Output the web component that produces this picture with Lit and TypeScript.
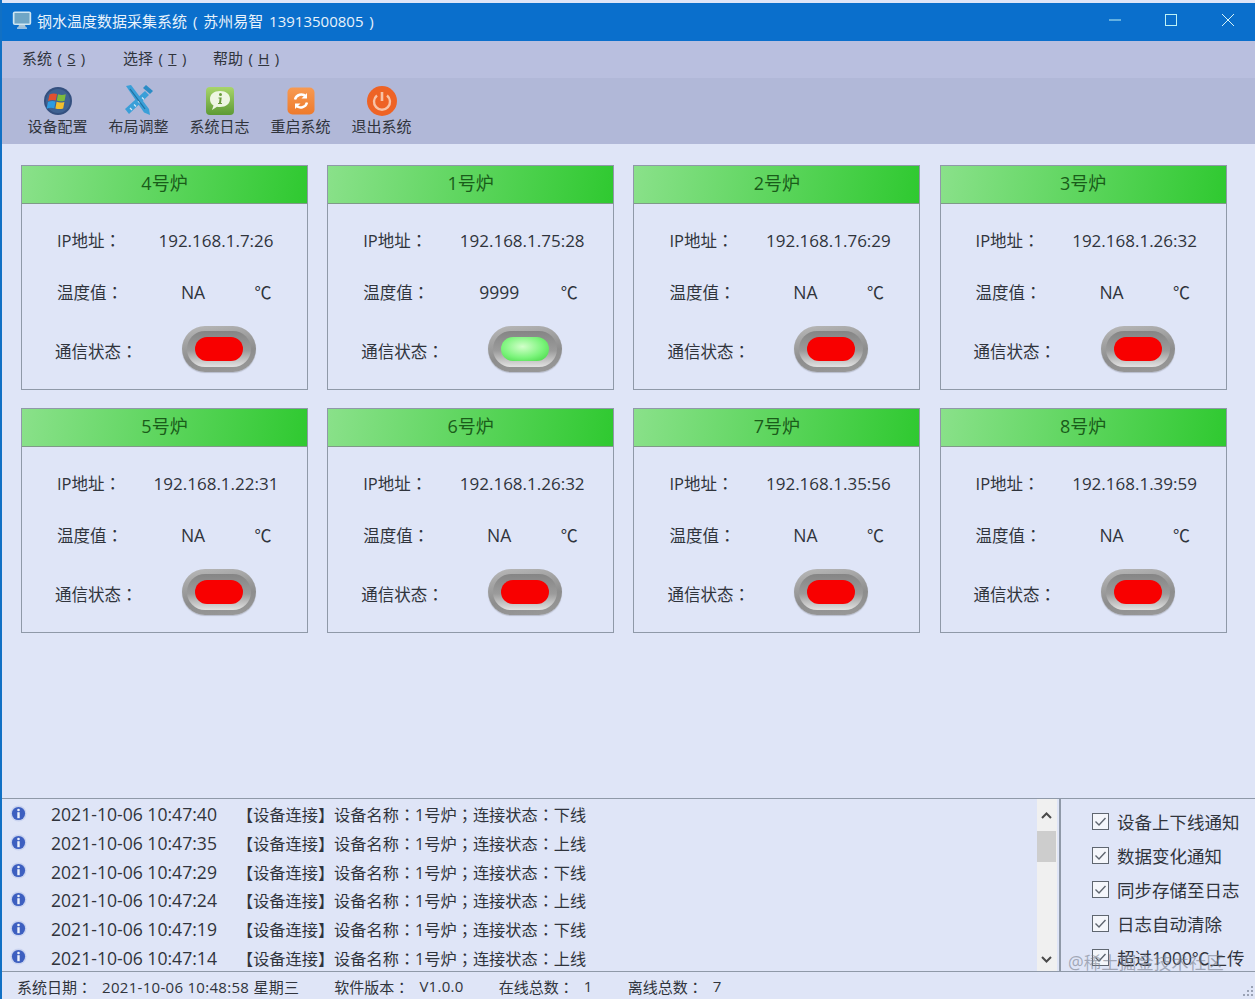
import {LitElement, html, css} from 'lit';
import {customElement, property} from 'lit/decorators.js';
import {classMap} from 'lit/directives/class-map.js';

const furnaces = [
    {name: '4号炉', ip: '192.168.1.7:26', temp: 'NA', online: false},
    {name: '1号炉', ip: '192.168.1.75:28', temp: '9999', online: true},
    {name: '2号炉', ip: '192.168.1.76:29', temp: 'NA', online: false},
    {name: '3号炉', ip: '192.168.1.26:32', temp: 'NA', online: false},
    {name: '5号炉', ip: '192.168.1.22:31', temp: 'NA', online: false},
    {name: '6号炉', ip: '192.168.1.26:32', temp: 'NA', online: false},
    {name: '7号炉', ip: '192.168.1.35:56', temp: 'NA', online: false},
    {name: '8号炉', ip: '192.168.1.39:59', temp: 'NA', online: false},
];

const logs = [
    {time: '2021-10-06 10:47:40', state: '下线'},
    {time: '2021-10-06 10:47:35', state: '上线'},
    {time: '2021-10-06 10:47:29', state: '下线'},
    {time: '2021-10-06 10:47:24', state: '上线'},
    {time: '2021-10-06 10:47:19', state: '下线'},
    {time: '2021-10-06 10:47:14', state: '上线'},
];

const options = ['设备上下线通知', '数据变化通知', '同步存储至日志', '日志自动清除', '超过1000℃上传'];

// the TC face centres full-width colons and semicolons, the SC one pushes them left
const punct = css`
    .p {
        font-family: 'Noto Sans CJK TC', sans-serif;
    }
`;

const zh = (text: string) =>
    text.split(/([：；])/).map((part) => (part === '：' || part === '；' ? html`<span class="p">${part}</span>` : part));

const monitorIcon = html`<svg width="20" height="20" viewBox="0 0 20 20">
    <rect x="0.8" y="1.5" width="18.4" height="13.5" rx="2" fill="#cfe6f2" />
    <rect x="2.5" y="3" width="15" height="10.5" fill="#6fa6c6" />
    <path d="M7 15h6l1 2.5H6z" fill="#a9c4d4" />
    <rect x="5" y="17.5" width="10" height="1.2" fill="#d6e4ec" />
</svg>`;

const orbIcon = html`<svg width="30" height="30" viewBox="0 0 30 30">
    <circle cx="15" cy="15" r="14" fill="#34507f" />
    <circle cx="15" cy="15" r="12" fill="#3f6292" />
    <path d="M6.500 8.500q3.500-1.800 7.500-.6l-1.200 6.600q-4-1.200-7.700 .6z" fill="#e2512f" />
    <path d="M15 8.200q3.500 1.400 7.800 .1l-1.200 6.400q-4.200 1.200-7.800-.1z" fill="#7dbb3c" />
    <path d="M5 16q3.500-1.800 7.500-.6l-1.200 6.800q-4-1.200-7.700 .6z" fill="#2f9be0" />
    <path d="M13.600 15.800q3.500 1.400 7.800 .1l-1.200 6.600q-4.200 1.200-7.800-.1z" fill="#f4bf2c" />
</svg>`;

const toolsIcon = html`<svg width="30" height="32" viewBox="0 0 30 32">
    <path d="M2 1l5-1 18 24 1 6-6-2.500z" fill="#3a9fd8" />
    <path d="M1 24L21 6l4 4L5 29z" fill="#3a9fd8" />
    <path d="M19 3l3-3 7 6-3 3z" fill="#2b8cc6" />
    <path d="M6 23l2 2M10 19.500l2 2M14 16l2 2M18 12.500l2 2" stroke="#d5eaf6" stroke-width="1.200" />
    <path d="M6 4l15 20" stroke="#1f6f9f" stroke-width="1.200" />
</svg>`;

const bubbleIcon = html`<svg width="30" height="30" viewBox="0 0 30 30">
    <defs>
        <linearGradient id="bubble" x1="0" y1="0" x2="0" y2="1">
            <stop offset="0" stop-color="#a8d56a" />
            <stop offset="1" stop-color="#5d9a35" />
        </linearGradient>
    </defs>
    <rect x="1" y="1" width="28" height="28" rx="4" fill="url(#bubble)" />
    <path d="M15 5c6 0 10 3.200 10 8s-4 8-10 8c-1 0-2-.1-3-.3L7 24l1.500-4.500C6 18 5 15.800 5 13c0-4.800 4-8 10-8z" fill="#eef6e2" />
    <circle cx="15.500" cy="8.500" r="1.500" fill="#6a9a3c" />
    <path d="M13.500 11.500h3.200l-.7 5.500h1v1h-4v-1h1l.6-4.500h-1.100z" fill="#6a9a3c" />
</svg>`;

const refreshIcon = html`<svg width="28" height="28" viewBox="0 0 28 28">
    <defs>
        <linearGradient id="orange" x1="0" y1="0" x2="0" y2="1">
            <stop offset="0" stop-color="#f79a52" />
            <stop offset="1" stop-color="#ee7a2c" />
        </linearGradient>
    </defs>
    <rect x="0.5" y="0.5" width="27" height="27" rx="5" fill="url(#orange)" />
    <path d="M8 12.500a6.500 6.500 0 0 1 11-3" fill="none" stroke="#fff" stroke-width="2.400" />
    <path d="M20 6v5.500h-5.500z" fill="#fff" />
    <path d="M20 15.500a6.500 6.500 0 0 1-11 3" fill="none" stroke="#fff" stroke-width="2.400" />
    <path d="M8 22v-5.500h5.500z" fill="#fff" />
</svg>`;

const powerIcon = html`<svg width="30" height="30" viewBox="0 0 30 30">
    <circle cx="15" cy="15" r="15" fill="#ee6325" />
    <path d="M10 9.500a8 8 0 1 0 10 0" fill="none" stroke="#f8c3a6" stroke-width="2.400" />
    <path d="M15 6v9" stroke="#f8c3a6" stroke-width="2.600" />
</svg>`;

const tools = [
    {label: '设备配置', icon: orbIcon},
    {label: '布局调整', icon: toolsIcon},
    {label: '系统日志', icon: bubbleIcon},
    {label: '重启系统', icon: refreshIcon},
    {label: '退出系统', icon: powerIcon},
];

const infoIcon = html`<svg width="17" height="17" viewBox="0 0 17 17">
    <circle cx="8.500" cy="8.500" r="8" fill="#c9d3ef" />
    <circle cx="8.500" cy="8.500" r="6.600" fill="#3d5fc0" />
    <circle cx="8.500" cy="5" r="1.300" fill="#eef2fb" />
    <rect x="7.300" y="7.200" width="2.400" height="6" fill="#eef2fb" />
</svg>`;

/**
 * One furnace card with its address, temperature and connection lamp.
 */
@customElement('furnace-card')
export class FurnaceCard extends LitElement {
    static override styles = [
        punct,
        css`
            :host {
                display: block;
            }

            .card {
                height: 225px;
                box-sizing: border-box;
                border: 1px solid #8f99a8;
                color: #30343c;
                font-size: 16.5px;
            }

            .head {
                height: 38px;
                box-sizing: border-box;
                padding-bottom: 5px;
                display: flex;
                align-items: center;
                justify-content: center;
                background: linear-gradient(100deg, #8ae18a, #2fc930);
                border-bottom: 1px solid #7f9a88;
                color: #1a5c1a;
                font-size: 18px;
            }

            .body {
                padding: 24px 0 0 35px;
            }

            .row {
                height: 24px;
                display: grid;
                grid-template-columns: 84px 104px 36px;
                align-items: center;
            }

            .row + .row {
                margin-top: 27px;
            }

            .value {
                font-size: 17.5px;
                text-align: center;
                white-space: nowrap;
            }

            .ip {
                grid-template-columns: 84px 150px;
            }

            .ip .value {
                font-size: 17px;
            }

            .unit {
                text-align: center;
                font-size: 17px;
            }

            .status {
                display: flex;
                align-items: center;
                height: 46px;
                margin: 23px 0 0 -2px;
            }

            .status span.label {
                width: 127px;
                flex: none;
                padding-top: 3px;
            }

            .lamp {
                width: 74px;
                height: 46px;
                box-sizing: border-box;
                padding: 5px;
                border-radius: 23px;
                background: linear-gradient(170deg, #b9b9b9, #8d8d8d 60%, #9a9a9a);
                box-shadow: 0 1px 1px #b7bccb;
            }

            .ring {
                height: 100%;
                box-sizing: border-box;
                padding: 6px 8px;
                border-radius: 18px;
                background: linear-gradient(180deg, #858585, #9b9b9b 55%, #e2e2e2);
            }

            .light {
                height: 100%;
                border-radius: 12px;
                background: #f80000;
            }

            .online .light {
                background: radial-gradient(ellipse at 45% 40%, #d2ffca, #7bf47b 55%, #3fd23f);
            }
        `,
    ];

    @property({attribute: false})
    furnace = furnaces[0];

    override render() {
        const f = this.furnace;
        return html`
            <div class="card">
                <div class="head">${f.name}</div>
                <div class="body">
                    <div class="row ip">
                        <span>${zh('IP地址：')}</span>
                        <span class="value">${f.ip}</span>
                    </div>
                    <div class="row">
                        <span>${zh('温度值：')}</span>
                        <span class="value">${f.temp}</span>
                        <span class="unit">℃</span>
                    </div>
                    <div class="status ${classMap({online: f.online})}">
                        <span class="label">${zh('通信状态：')}</span>
                        <div class="lamp"><div class="ring"><div class="light"></div></div></div>
                    </div>
                </div>
            </div>
        `;
    }
}

@customElement('app-root')
export class AppRoot extends LitElement {
    static override styles = [
        punct,
        css`
            :host {
                display: flex;
                flex-direction: column;
                width: 1255px;
                height: 999px;
                box-sizing: border-box;
                border-left: 2px solid #1170c4;
                background: #dfe5f7;
                overflow: hidden;
                font-family: 'Open Sans', 'Noto Sans CJK SC', sans-serif;
                color: #30343c;
            }

            .titlebar {
                height: 38px;
                flex: none;
                margin-top: 3px;
                box-sizing: border-box;
                padding: 0 0 4px 10px;
                display: flex;
                align-items: center;
                background: #0a6fcc;
                color: #e8f2fb;
                font-size: 15px;
                word-spacing: 2px;
            }

            .titlebar .title {
                margin-left: 5px;
                white-space: nowrap;
            }

            .controls {
                margin-left: auto;
                padding-right: 21px;
                display: flex;
                align-items: center;
            }

            .controls svg {
                display: block;
            }

            .controls .max {
                margin-left: 44px;
            }

            .controls .close {
                margin-left: 45px;
            }

            .menubar {
                height: 37px;
                flex: none;
                box-sizing: border-box;
                padding: 0 0 4px 20px;
                display: flex;
                align-items: center;
                background: #b9bfdf;
                font-size: 15px;
                word-spacing: 1.5px;
            }

            .menubar span {
                white-space: pre;
            }

            .menu-s {
                width: 101px;
            }

            .menu-t {
                width: 90px;
            }

            .toolbar {
                height: 66px;
                flex: none;
                display: flex;
                padding-left: 15px;
                background: #b1b8d8;
                box-sizing: border-box;
            }

            .tool {
                width: 81px;
                display: flex;
                flex-direction: column;
                align-items: center;
                font-size: 15px;
            }

            .tool .icon {
                height: 32px;
                margin-top: 7px;
                display: flex;
                align-items: center;
            }

            .tool .icon svg {
                display: block;
            }

            .tool .label {
                margin-top: -2px;
                line-height: 22px;
            }

            .grid {
                flex: 1;
                min-height: 0;
                display: grid;
                grid-template-columns: repeat(4, 287px);
                grid-auto-rows: 225px;
                align-content: start;
                column-gap: 19.2px;
                row-gap: 18px;
                padding: 21px 0 0 19px;
            }

            .bottom {
                height: 174px;
                flex: none;
                display: flex;
                border-top: 1px solid #8f99a8;
                border-bottom: 1px solid #8f99a8;
                box-sizing: border-box;
            }

            .log {
                width: 1035px;
                flex: none;
                overflow: hidden;
                padding-top: 1px;
                box-sizing: border-box;
            }

            .log-row {
                height: 28.7px;
                display: flex;
                align-items: center;
                white-space: nowrap;
                padding-left: 8px;
                font-size: 16.2px;
            }

            .log-row svg {
                flex: none;
                margin-top: -2px;
            }

            .log-row .time {
                width: 186px;
                margin-left: 24px;
                font-size: 17.6px;
                flex: none;
            }

            .scrollbar {
                width: 19px;
                flex: none;
                display: flex;
                flex-direction: column;
                background: #f0f0f0;
                border-right: 1px solid #f0f0f0;
            }

            .arrow {
                height: 32px;
                flex: none;
                display: flex;
                align-items: center;
                justify-content: center;
            }

            .arrow.down {
                height: 24px;
            }

            .thumb {
                height: 31px;
                flex: none;
                background: #cdcdcd;
            }

            .track {
                flex: 1;
            }

            .options {
                flex: 1;
                margin-left: 2px;
                border-left: 2px solid #8f99a8;
                padding: 6px 0 0 31px;
            }

            .option {
                height: 33.8px;
                display: flex;
                align-items: center;
                gap: 8px;
                font-size: 17.5px;
                white-space: nowrap;
            }

            .option svg {
                flex: none;
            }

            .statusbar {
                height: 27px;
                flex: none;
                box-sizing: border-box;
                display: flex;
                align-items: center;
                gap: 35px;
                padding: 2px 0 0 15px;
                font-size: 15px;
                position: relative;
            }

            .stat {
                display: flex;
                gap: 10px;
                white-space: nowrap;
            }

            .stat .v {
                letter-spacing: 0.3px;
            }

            .grip {
                position: absolute;
                right: 1px;
                bottom: 1px;
            }

            .watermark {
                position: absolute;
                left: 1068px;
                top: 949px;
                font-size: 17.5px;
                color: rgba(120, 126, 140, 0.6);
                white-space: nowrap;
            }
        `,
    ];

    private renderCheck() {
        return html`<svg width="17" height="17" viewBox="0 0 17 17">
            <rect x="0.5" y="0.5" width="16" height="16" fill="#f4f6fb" stroke="#5f6670" />
            <path d="M3.500 8.500l3.500 3.500 6.500-7" fill="none" stroke="#5f6670" stroke-width="1.400" />
        </svg>`;
    }

    override render() {
        return html`
            <div class="titlebar">
                ${monitorIcon}
                <span class="title">钢水温度数据采集系统 ( 苏州易智 13913500805 )</span>
                <div class="controls">
                    <svg width="12" height="12" viewBox="0 0 12 12"><path d="M0 6h12" stroke="#bdf2f5" /></svg>
                    <svg class="max" width="12" height="12" viewBox="0 0 12 12"><rect x="0.5" y="0.5" width="11" height="11" fill="none" stroke="#bdf2f5" /></svg>
                    <svg class="close" width="12" height="12" viewBox="0 0 12 12"><path d="M0 0l12 12M12 0L0 12" stroke="#d8f4f6" /></svg>
                </div>
            </div>
            <div class="menubar">
                <span class="menu-s">系统 ( <u>S</u> )</span>
                <span class="menu-t">选择 ( <u>T</u> )</span>
                <span>帮助 ( <u>H</u> )</span>
            </div>
            <div class="toolbar">
                ${tools.map(
                    (t) => html`<div class="tool">
                        <div class="icon">${t.icon}</div>
                        <span class="label">${t.label}</span>
                    </div>`
                )}
            </div>
            <div class="grid">
                ${furnaces.map((f) => html`<furnace-card .furnace=${f}></furnace-card>`)}
            </div>
            <div class="bottom">
                <div class="log">
                    ${logs.map(
                        (l) => html`<div class="log-row">
                            ${infoIcon}
                            <span class="time">${l.time}</span>
                            <span>${zh(`【设备连接】设备名称：1号炉；连接状态：${l.state}`)}</span>
                        </div>`
                    )}
                </div>
                <div class="scrollbar">
                    <div class="arrow">
                        <svg width="11" height="7" viewBox="0 0 11 7"><path d="M1 6l4.500-4.500L10 6" fill="none" stroke="#4a4a4a" stroke-width="2" /></svg>
                    </div>
                    <div class="thumb"></div>
                    <div class="track"></div>
                    <div class="arrow down">
                        <svg width="11" height="7" viewBox="0 0 11 7"><path d="M1 1l4.500 4.500L10 1" fill="none" stroke="#4a4a4a" stroke-width="2" /></svg>
                    </div>
                </div>
                <div class="options">
                    ${options.map(
                        (o) => html`<div class="option">${this.renderCheck()}<span>${o}</span></div>`
                    )}
                </div>
            </div>
            <div class="statusbar">
                <div class="stat"><span>${zh('系统日期：')}</span><span class="v">2021-10-06 10:48:58 星期三</span></div>
                <div class="stat"><span>${zh('软件版本：')}</span><span class="v">V1.0.0</span></div>
                <div class="stat"><span>${zh('在线总数：')}</span><span class="v">1</span></div>
                <div class="stat"><span>${zh('离线总数：')}</span><span class="v">7</span></div>
                <svg class="grip" width="13" height="13" viewBox="0 0 13 13" fill="#9aa2b4">
                    <rect x="10" y="1" width="2" height="2" />
                    <rect x="6" y="5" width="2" height="2" />
                    <rect x="10" y="5" width="2" height="2" />
                    <rect x="2" y="9" width="2" height="2" />
                    <rect x="6" y="9" width="2" height="2" />
                    <rect x="10" y="9" width="2" height="2" />
                </svg>
            </div>
            <div class="watermark">@稀土掘金技术社区</div>
        `;
    }
}

declare global {
    interface HTMLElementTagNameMap {
        'app-root': AppRoot;
        'furnace-card': FurnaceCard;
    }
}
